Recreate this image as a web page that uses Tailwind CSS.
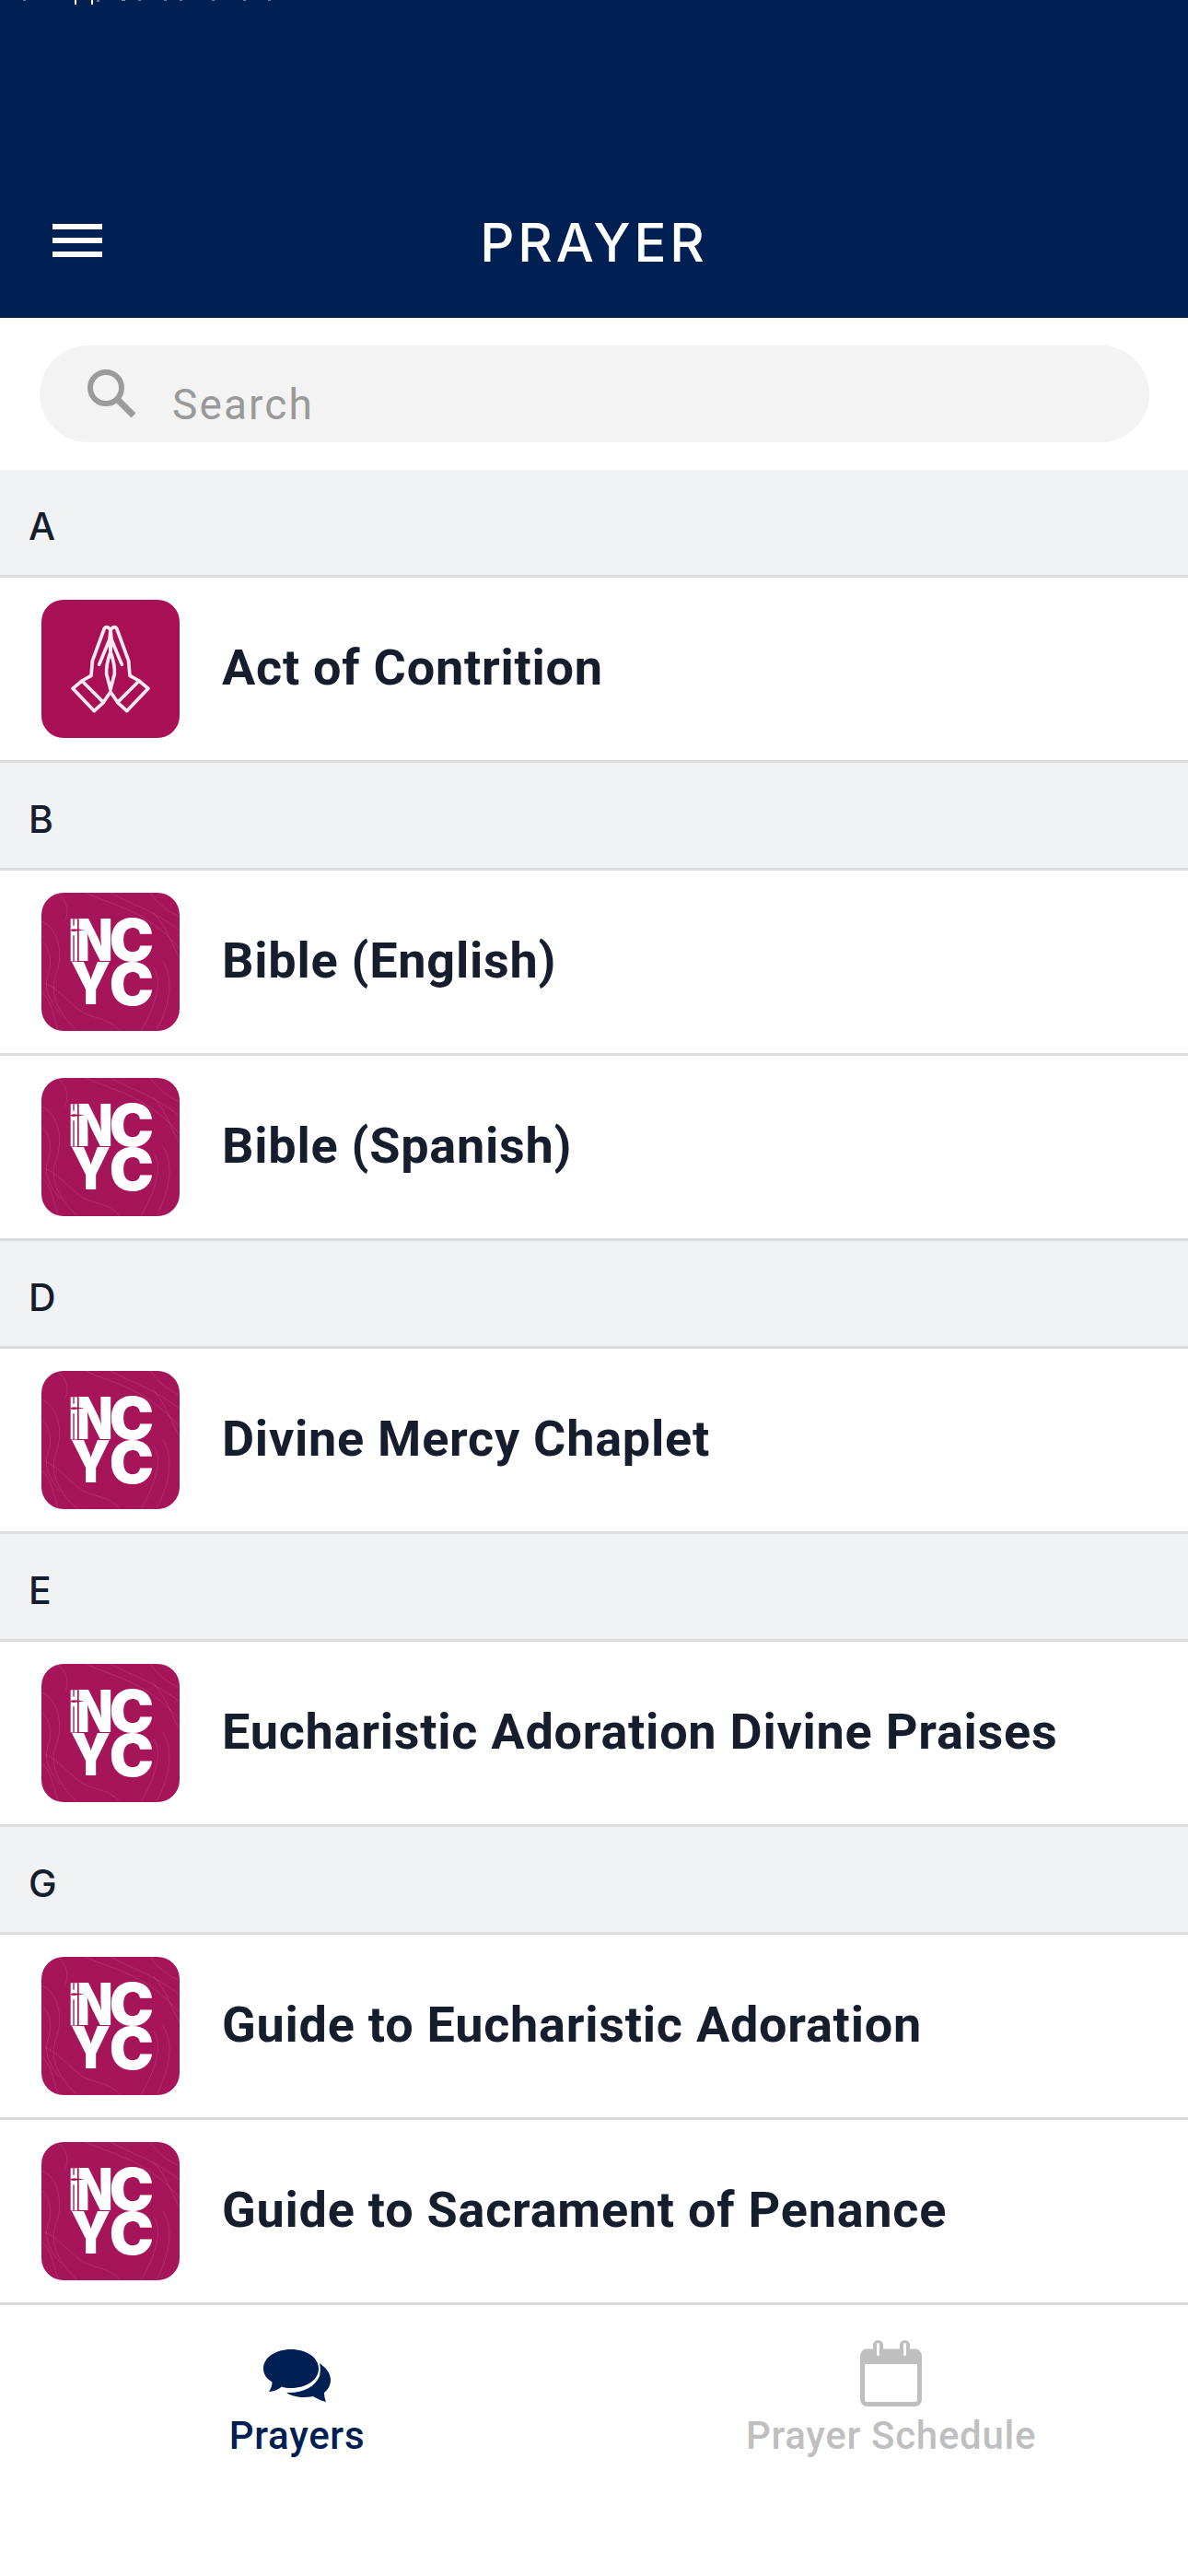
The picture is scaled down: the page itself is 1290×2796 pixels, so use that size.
<!DOCTYPE html>
<html lang="en">
<head>
    <title>Prayer</title>
    <meta charset="UTF-8">
    <meta name="viewport" content="width=device-width, initial-scale=1.0">
    <script src="https://cdn.jsdelivr.net/npm/@tailwindcss/browser@4"></script>
</head>
<body class="bg-white w-[1290px] h-[2796px] overflow-hidden font-['Roboto',sans-serif]">
    <!-- Shared logo art -->
    <svg class="hidden">
        <symbol id="ncyc" viewBox="75 57 450 450">
            <g fill="none" stroke="#fff" stroke-opacity="0.14" stroke-width="2.5">
                <path d="M75 150 C130 170 150 260 120 330 C105 380 120 440 190 505"/>
                <path d="M75 215 C105 235 110 290 95 330 C85 365 95 400 135 450"/>
                <path d="M220 57 C280 90 420 110 525 240"/>
                <path d="M300 57 C360 90 450 120 525 180"/>
                <path d="M430 57 C450 90 490 120 525 135"/>
                <path d="M125 57 C170 90 160 130 150 150"/>
                <path d="M85 350 C130 370 160 410 200 440 C240 470 290 460 330 505"/>
                <path d="M440 300 C470 340 450 420 400 505"/>
                <path d="M470 280 C510 340 490 430 450 505"/>
                <path d="M440 120 C490 180 500 230 525 270"/>
                <path d="M75 380 C110 410 110 450 130 505"/>
            </g>
            <rect x="170" y="142" width="22" height="138" fill="#fff"/>
            <rect x="178" y="142" width="4" height="22" fill="#a6145a"/>
            <rect x="178" y="196" width="4" height="84" fill="#a6145a"/>
            <g fill="#fff" font-family="Inter, sans-serif" font-weight="900" font-size="190">
                <text x="187" y="280" textLength="121" lengthAdjust="spacingAndGlyphs">N</text>
                <text x="296" y="280" textLength="145" lengthAdjust="spacingAndGlyphs">C</text>
                <text x="170" y="421" textLength="130" lengthAdjust="spacingAndGlyphs">Y</text>
                <text x="296" y="423" textLength="145" lengthAdjust="spacingAndGlyphs">C</text>
            </g>
            <rect x="192" y="142" width="5" height="138" fill="#a6145a"/>
            <polygon points="170,177 180,175 216,178 180,183 170,181" fill="#a6145a"/>
        </symbol>
    </svg>

    <!-- Header -->
    <header class="relative bg-[#001f52] h-[345px] pt-[242px]">
        <!-- clipped status text at the very top -->
        <svg class="absolute top-0 left-0" width="320" height="6" fill="#fff">
            <rect x="81" width="2" height="5"/>
            <rect x="99" width="2" height="5"/>
            <rect x="25" width="3" height="1" opacity="0.4"/>
            <rect x="105" width="3" height="2" opacity="0.4"/>
            <rect x="132" width="4" height="1" opacity="0.5"/>
            <rect x="150" width="3" height="1" opacity="0.4"/>
            <rect x="178" width="3" height="1" opacity="0.4"/>
            <rect x="195" width="3" height="1" opacity="0.4"/>
            <rect x="230" width="3" height="1" opacity="0.4"/>
            <rect x="264" width="3" height="1" opacity="0.4"/>
            <rect x="291" width="3" height="1" opacity="0.4"/>
        </svg>
        <nav class="grid grid-cols-[1fr_auto_1fr] items-start">
            <div class="flex flex-col gap-[9px] w-[54px] ml-[57px] mt-[1px]">
                <span class="h-[6px] bg-white"></span>
                <span class="h-[6px] bg-white"></span>
                <span class="h-[6px] bg-white"></span>
            </div>
            <h1 class="text-white text-[58px] leading-[42px] font-['Inter',sans-serif] font-medium tracking-[3.8px]">PRAYER</h1>
            <div></div>
        </nav>
    </header>

    <!-- Search -->
    <div class="h-[165px] pt-[30px] px-[43px] bg-white">
        <div class="h-[105px] w-[1205px] rounded-full bg-[#f3f3f3] flex items-center pl-[52px]">
            <svg width="52" height="52" viewBox="0 0 52 52" fill="none" stroke="#9b9b9b" stroke-width="6" class="mb-[2px]">
                <circle cx="20" cy="20" r="17"/>
                <path d="M33 33 L50 50" stroke-width="7"/>
            </svg>
            <span class="ml-[40px] mt-[22px] text-[46px] leading-none tracking-[2.1px] text-[#999999]">Search</span>
        </div>
    </div>

    <!-- List -->
    <main>
        <div class="h-[117px] bg-[#f1f2f4] border-b-[3px] border-[#dcdcdc] flex items-center pl-[31px] pt-[9px] text-[41px] font-['Inter',sans-serif] font-medium text-[#161e2e]">A</div>
        <div class="h-[201px] border-b-[3px] border-[#dcdcdc] flex items-center pl-[45px] gap-[46px]">
            <svg class="w-[150px] h-[150px]" viewBox="75 63 450 450">
                <rect x="75" y="63" width="450" height="450" rx="72" fill="#a80f55"/>
                <g fill="none" stroke="#fbeaf1" stroke-width="11" stroke-linejoin="round" stroke-linecap="round">
                    <polygon points="207,327 177,352 247,425 277,397"/>
                    <polygon points="393,327 423,352 353,425 323,397"/>
                    <path d="M297 158 C292 150 284 150 280 156 L241 262 L237 310 L207 327"/>
                    <path d="M303 158 C308 150 316 150 320 156 L359 262 L363 310 L393 327"/>
                    <path d="M277 397 L300 363 L323 397"/>
                    <path d="M300 355 L287 305 C285 280 292 255 300 232 C308 255 315 280 313 305 L300 355"/>
                    <path d="M263 274 L297 192 L300 160 L303 192 L337 274"/>
                    <path d="M297 192 L300 232 L303 192"/>
                </g>
            </svg>
            <span class="mb-[3px] text-[54px] font-bold tracking-[0.75px] text-[#161e2e]">Act of Contrition</span>
        </div>

        <div class="h-[117px] bg-[#f1f2f4] border-b-[3px] border-[#dcdcdc] flex items-center pl-[31px] pt-[9px] text-[41px] font-['Inter',sans-serif] font-medium text-[#161e2e]">B</div>
        <div class="h-[201px] border-b-[3px] border-[#dcdcdc] flex items-center pl-[45px] gap-[46px]">
            <svg class="w-[150px] h-[150px] rounded-[24px] bg-[#a6145a]"><use href="#ncyc"/></svg>
            <span class="mb-[3px] text-[54px] font-bold tracking-[0.75px] text-[#161e2e]">Bible (English)</span>
        </div>
        <div class="h-[201px] border-b-[3px] border-[#dcdcdc] flex items-center pl-[45px] gap-[46px]">
            <svg class="w-[150px] h-[150px] rounded-[24px] bg-[#a6145a]"><use href="#ncyc"/></svg>
            <span class="mb-[3px] text-[54px] font-bold tracking-[0.75px] text-[#161e2e]">Bible (Spanish)</span>
        </div>

        <div class="h-[117px] bg-[#f1f2f4] border-b-[3px] border-[#dcdcdc] flex items-center pl-[31px] pt-[9px] text-[41px] font-['Inter',sans-serif] font-medium text-[#161e2e]">D</div>
        <div class="h-[201px] border-b-[3px] border-[#dcdcdc] flex items-center pl-[45px] gap-[46px]">
            <svg class="w-[150px] h-[150px] rounded-[24px] bg-[#a6145a]"><use href="#ncyc"/></svg>
            <span class="mb-[3px] text-[54px] font-bold tracking-[0.75px] text-[#161e2e]">Divine Mercy Chaplet</span>
        </div>

        <div class="h-[117px] bg-[#f1f2f4] border-b-[3px] border-[#dcdcdc] flex items-center pl-[31px] pt-[9px] text-[41px] font-['Inter',sans-serif] font-medium text-[#161e2e]">E</div>
        <div class="h-[201px] border-b-[3px] border-[#dcdcdc] flex items-center pl-[45px] gap-[46px]">
            <svg class="w-[150px] h-[150px] rounded-[24px] bg-[#a6145a]"><use href="#ncyc"/></svg>
            <span class="mb-[3px] text-[54px] font-bold tracking-[0.75px] text-[#161e2e]">Eucharistic Adoration Divine Praises</span>
        </div>

        <div class="h-[117px] bg-[#f1f2f4] border-b-[3px] border-[#dcdcdc] flex items-center pl-[31px] pt-[9px] text-[41px] font-['Inter',sans-serif] font-medium text-[#161e2e]">G</div>
        <div class="h-[201px] border-b-[3px] border-[#dcdcdc] flex items-center pl-[45px] gap-[46px]">
            <svg class="w-[150px] h-[150px] rounded-[24px] bg-[#a6145a]"><use href="#ncyc"/></svg>
            <span class="mb-[3px] text-[54px] font-bold tracking-[0.75px] text-[#161e2e]">Guide to Eucharistic Adoration</span>
        </div>
        <div class="h-[201px] border-b-[3px] border-[#dcdcdc] flex items-center pl-[45px] gap-[46px]">
            <svg class="w-[150px] h-[150px] rounded-[24px] bg-[#a6145a]"><use href="#ncyc"/></svg>
            <span class="mb-[3px] text-[54px] font-bold tracking-[0.75px] text-[#161e2e]">Guide to Sacrament of Penance</span>
        </div>
    </main>

    <!-- Tab bar -->
    <footer class="grid grid-cols-2 h-[294px] bg-white">
        <div class="flex flex-col items-center pt-[47px]">
            <svg width="73" height="58" viewBox="0 0 73 58" fill="#001f52">
                <path d="M30 1 C47 1 60 10 60 22 C60 34 47 43 30 43 C26 43 23 42.500 20 41.500 C16 44.500 11 47 6 47 C8 44 9.500 40 9.500 36.500 C3.500 33 0 28 0 22 C0 10 13 1 30 1 Z"/>
                <path d="M61 16 C68 21 73 27 73 34 C73 40 70 45 66 48 C66 52 67 55 68 58 C63 57 58 54 54 52 C44 54 32 53 25 48 C42 49 56 42 61 30 C62 25 62 20 61 16 Z"/>
            </svg>
            <span class="mt-[13px] text-[42px] leading-[48px] font-medium tracking-[0.7px] text-[#001f52]">Prayers</span>
        </div>
        <div class="flex flex-col items-center pt-[38px]">
            <svg width="67" height="72" viewBox="0 0 67 72" fill="none">
                <rect x="2.500" y="12" width="62" height="57.500" rx="5" stroke="#bfbfbf" stroke-width="5"/>
                <rect x="2" y="10" width="63" height="16" rx="4" fill="#bfbfbf"/>
                <rect x="14" y="0" width="11" height="20" rx="5.500" fill="#bfbfbf"/>
                <rect x="43" y="0" width="11" height="20" rx="5.500" fill="#bfbfbf"/>
                <rect x="18" y="3" width="3" height="14" rx="1.500" fill="#fff"/>
                <rect x="47" y="3" width="3" height="14" rx="1.500" fill="#fff"/>
            </svg>
            <span class="mt-[8px] text-[42px] leading-[48px] font-medium tracking-[0.7px] text-[#bfbfbf]">Prayer Schedule</span>
        </div>
    </footer>
</body>
</html>
